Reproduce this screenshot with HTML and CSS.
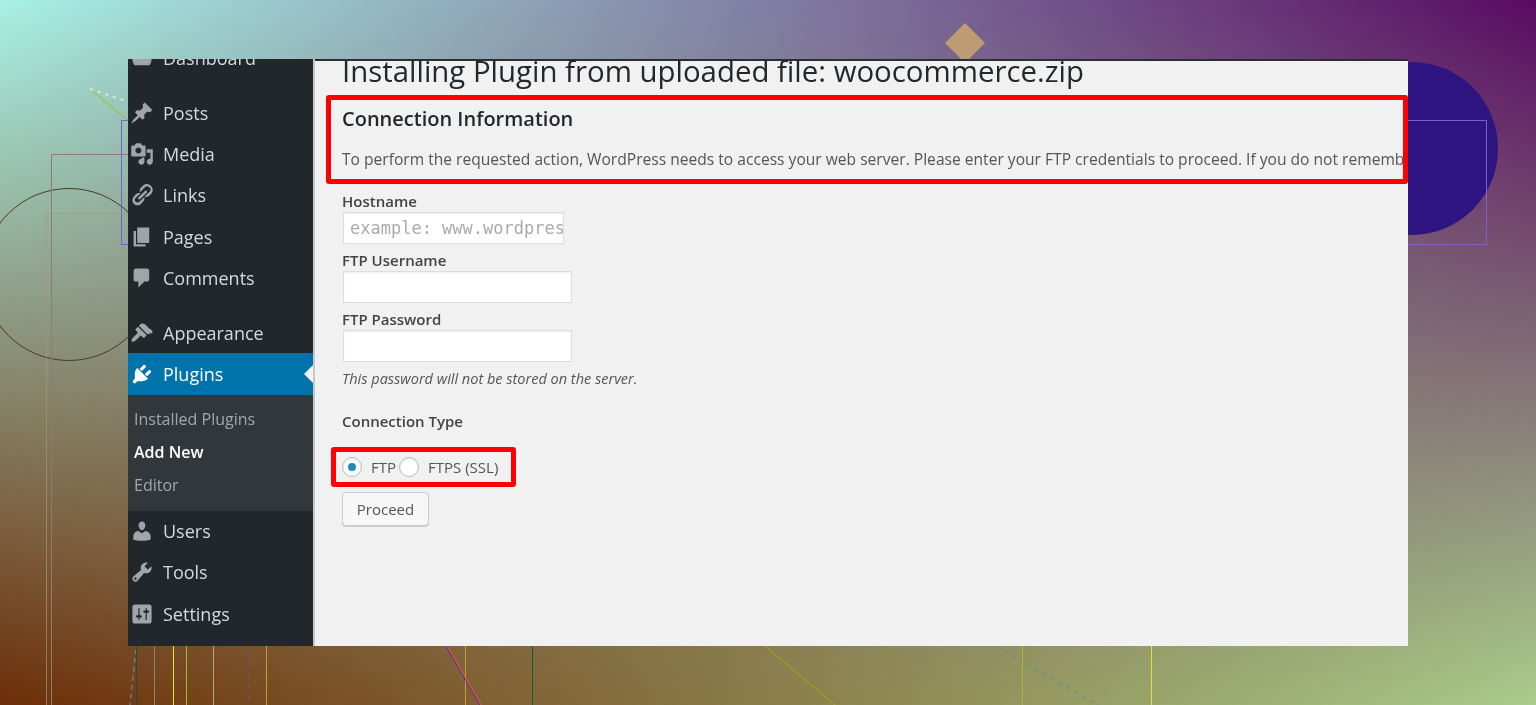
FILE: index.html
```html
<!DOCTYPE html>
<html lang="en">
<head>
    <meta charset="UTF-8">
    <meta name="viewport" content="width=device-width, initial-scale=1.0">
    <title>Connection Information</title>
    <link rel="stylesheet" href="styles.css">
</head>
<body>
    <div class="backdrop"></div>
    <svg class="shapes" width="1536" height="705" viewBox="0 0 1536 705" fill="none">
        <circle cx="1411.500" cy="148.500" r="86.500" fill="#2e1480"/>
        <path d="M965 23l20 20-20 20-20-20z" fill="#bd9b73"/>
        <circle cx="69" cy="274.500" r="86" stroke="#4a3a22"/>
        <rect x="121.500" y="120.500" width="1365" height="124" stroke="#7a5fd0"/>
        <path d="M51.500 705V154.500H130" stroke="#8d7c72"/>
        <path d="M46.500 705V213.500H130" stroke="#a39a72" stroke-opacity=".7"/>
        <path d="M90 89l40 33" stroke="#9ac000"/>
        <path d="M90 89l36 12" stroke="#dfe3e6" stroke-width="2" stroke-dasharray="3 5"/>
        <path d="M137 640l-7 65" stroke="#6d8fc0" stroke-dasharray="5 4"/>
        <path d="M136.500 640v65" stroke="#1f4f3c"/>
        <path d="M154.500 640v65" stroke="#8b8270"/>
        <path d="M173.500 640v65" stroke="#e6e040"/>
        <path d="M186.500 640v65" stroke="#9cc030"/>
        <path d="M213.500 640v65" stroke="#b0a878"/>
        <path d="M248.500 640v65" stroke="#8e3aa0" stroke-dasharray="6 5"/>
        <path d="M266.500 640v65" stroke="#c89a30"/>
        <path d="M465.500 640v65" stroke="#c89a30"/>
        <path d="M532.500 640v65" stroke="#125c48"/>
        <path d="M447 646l34 59" stroke="#f06010" stroke-width="1.500"/>
        <path d="M446 646l34 59" stroke="#4020f0"/>
        <path d="M765 646l70 59" stroke="#9ab000"/>
        <path d="M996 646l102 59" stroke="#6a80a8" stroke-dasharray="5 4"/>
        <path d="M1022.500 640v65" stroke="#9cc030"/>
        <path d="M1151.500 640v65" stroke="#dde040"/>
    </svg>

    <div class="shot">
        <nav class="sidebar">
            <a class="menu-item first"><svg class="icon" viewBox="0 0 20 20"><path d="M3.760 16h12.480c1.100-1.430 1.760-3.210 1.760-5.140 0-4.800-3.960-7.860-8-7.860s-8 3.060-8 7.860c0 1.930.66 3.710 1.760 5.140z"/></svg>Dashboard</a>
            <a class="menu-item group-start"><svg class="icon" viewBox="0 0 20 20"><path d="M10.440 3.020l1.820-1.820 6.360 6.350-1.830 1.820c-1.050-.68-2.480-.57-3.410.36l-.75.75c-.92.93-1.040 2.350-.35 3.410l-1.830 1.820-2.410-2.410-2.800 2.790c-.42.42-3.380 2.710-3.800 2.290s1.860-3.390 2.280-3.810l2.790-2.790L4.100 9.360l1.830-1.820c1.050.69 2.480.57 3.400-.36l.75-.75c.93-.92 1.050-2.350.36-3.410z"/></svg>Posts</a>
            <a class="menu-item"><svg class="icon" viewBox="0 0 20 20"><path d="M13 11V4c0-.55-.45-1-1-1h-1.670L9 1H5L3.670 3H2c-.55 0-1 .45-1 1v7c0 .55.45 1 1 1h10c.55 0 1-.45 1-1zM7 4.500c1.380 0 2.500 1.120 2.500 2.500S8.380 9.500 7 9.500 4.500 8.380 4.500 7 5.620 4.500 7 4.500zM14 6h5v10.500c0 1.380-1.120 2.500-2.500 2.500S14 17.880 14 16.500s1.120-2.500 2.500-2.500c.17 0 .34.020.5.050V9h-3V6zm-4 8.050V13h2v3.500c0 1.380-1.120 2.500-2.500 2.500S7 17.880 7 16.500 8.120 14 9.500 14c.17 0 .34.020.5.050z"/></svg>Media</a>
            <a class="menu-item"><svg class="icon" viewBox="0 0 20 20"><path d="M17.740 2.760c1.680 1.690 1.680 4.410 0 6.100l-1.530 1.520c-1.120 1.120-2.700 1.510-4.140 1.170l2.160-2.170.76-.76 1.530-1.520c.84-.84.84-2.210 0-3.050l-.76-.76c-.85-.84-2.220-.84-3.060 0l-1.520 1.530-.76.76-2.170 2.160c-.34-1.440.05-3.020 1.170-4.140l1.520-1.530c1.690-1.680 4.410-1.680 6.100 0zM8.590 13.430l5.340-5.340c.42-.42.42-1.100 0-1.520-.44-.43-1.130-.39-1.530 0l-5.330 5.340c-.42.42-.42 1.100 0 1.520.44.43 1.130.39 1.520 0zm-.76 2.290l4.140-4.140c.34 1.440-.05 3.020-1.170 4.140l-1.520 1.530c-1.690 1.680-4.410 1.680-6.100 0-1.680-1.690-1.680-4.410 0-6.100l1.530-1.520c1.120-1.120 2.700-1.510 4.140-1.170l-4.140 4.140c-.85.84-.85 2.210 0 3.050.84.84 2.210.84 3.050 0z"/></svg>Links</a>
            <a class="menu-item"><svg class="icon" viewBox="0 0 20 20"><path d="M6 15V2h10v13H6zm-1 1h8v2H3V5h2v11z"/></svg>Pages</a>
            <a class="menu-item"><svg class="icon" viewBox="0 0 20 20"><path d="M5 2h9c1.100 0 2 .9 2 2v7c0 1.100-.9 2-2 2h-2l-5 5v-5H5c-1.100 0-2-.9-2-2V4c0-1.100.9-2 2-2z"/></svg>Comments</a>
            <a class="menu-item group-start"><svg class="icon" viewBox="0 0 20 20"><path d="M14.480 11.060L7.410 3.990l1.500-1.500c.5-.56 2.300-.47 3.510.32 1.210.8 1.430 1.280 2.660 2.510 1.230 1.220 2.220 1.370 2.970 2.120.75.74.81 2.140.43 2.620zm-.71.710L6.700 4.700 4.930 6.470c-.39.39-.39 1.020 0 1.410l1.060 1.060c.39.39.39 1.030 0 1.420-.6.6-1.430 1.270-2.210 2.050-2.060 2.060-3.020 3.850-2.210 4.660.8.8 2.600-.16 4.650-2.220.78-.78 1.450-1.610 2.050-2.210.39-.39 1.030-.39 1.420 0l1.060 1.060c.39.39 1.020.39 1.410 0z"/></svg>Appearance</a>
            <a class="menu-item current"><svg class="icon" viewBox="0 0 20 20"><path d="M13.110 4.360L9.870 7.600 8 5.730l3.240-3.240c.35-.34 1.050-.2 1.560.32.52.51.66 1.210.31 1.550zm-8 1.770l.91-1.120 9.010 9.010-1.190.84c-.71.71-2.630 1.160-3.820 1.160H6.140L4.900 17.260c-.59.59-1.540.59-2.120 0-.59-.58-.59-1.530 0-2.120l1.240-1.240v-3.880c0-1.130.4-3.190 1.090-3.890zm7.260 3.970l3.240-3.240c.34-.35 1.040-.21 1.550.31.52.51.66 1.210.31 1.550l-3.240 3.250z"/></svg>Plugins</a>
            <div class="submenu">
                <a>Installed Plugins</a>
                <a class="active">Add New</a>
                <a>Editor</a>
            </div>
            <a class="menu-item"><svg class="icon" viewBox="0 0 20 20"><path d="M10 9.250c-2.270 0-2.730-3.440-2.730-3.440C7 4.020 7.820 2 9.970 2c2.160 0 2.980 2.020 2.710 3.810 0 0-.41 3.440-2.680 3.440zm0 2.570L12.720 10c2.390 0 4.520 2.330 4.520 4.530v2.490s-3.650 1.130-7.240 1.130c-3.650 0-7.240-1.130-7.240-1.130v-2.490c0-2.250 1.940-4.480 4.150-4.480z"/></svg>Users</a>
            <a class="menu-item"><svg class="icon" viewBox="0 0 20 20"><path d="M16.680 9.770c-1.340 1.340-3.300 1.670-4.950.99l-5.410 6.520c-.99.99-2.590.99-3.580 0s-.99-2.590 0-3.570l6.520-5.420c-.68-1.650-.35-3.610.99-4.950 1.280-1.280 3.120-1.620 4.720-1.060l-2.890 2.890 2.820 2.820 2.860-2.870c.53 1.580.18 3.400-1.080 4.650zM3.810 16.210c.4.39 1.040.39 1.430 0 .4-.4.4-1.040 0-1.430-.39-.4-1.030-.4-1.430 0-.39.39-.39 1.030 0 1.430z"/></svg>Tools</a>
            <a class="menu-item"><svg class="icon" viewBox="0 0 20 20"><path d="M18 16V4c0-1.100-.9-2-2-2H4c-1.100 0-2 .9-2 2v12c0 1.100.9 2 2 2h12c1.100 0 2-.9 2-2zM8 11h1c.55 0 1 .45 1 1s-.45 1-1 1H8v1.500c0 .28-.22.5-.5.5s-.5-.22-.5-.5V13H6c-.55 0-1-.45-1-1s.45-1 1-1h1V5.500c0-.28.22-.5.5-.5s.5.22.5.5V11zm5-2h-1c-.55 0-1-.45-1-1s.45-1 1-1h1V5.500c0-.28.22-.5.5-.5s.5.22.5.5V7h1c.55 0 1 .45 1 1s-.45 1-1 1h-1v5.500c0 .28-.22.5-.5.5s-.5-.22-.5-.5V9z"/></svg>Settings</a>
        </nav>

        <main class="content">
            <h1>Installing Plugin from uploaded file: woocommerce.zip</h1>

            <div class="highlight info">
                <h2>Connection Information</h2>
                <p>To perform the requested action, WordPress needs to access your web server. Please enter your FTP credentials to proceed. If you do not remember your credentials, you should contact your web host.</p>
            </div>

            <div class="field">
                <label for="hostname">Hostname</label>
                <input class="host-input" id="hostname" type="text" placeholder="example: www.wordpress.org">
            </div>
            <div class="field">
                <label for="username">FTP Username</label>
                <input id="username" type="text">
            </div>
            <div class="field">
                <label for="password">FTP Password</label>
                <input id="password" type="text">
            </div>
            <em class="note">This password will not be stored on the server.</em>

            <h3>Connection Type</h3>
            <div class="highlight radios">
                <label><input type="radio" name="type" checked>FTP</label>
                <label><input type="radio" name="type">FTPS (SSL)</label>
            </div>

            <button class="button">Proceed</button>
        </main>
    </div>
</body>
</html>
```

FILE: styles.css
```css
html, body {
    height: 100%;
}
body {
    margin: 0;
    height: 705px;
    padding: 59px 128px 0;
    box-sizing: border-box;
    overflow: hidden;
    position: relative;
    font-family: "Open Sans", sans-serif;
    background: linear-gradient(to right, #6d2e08, #a9cd8a);
}
.backdrop {
    position: absolute;
    inset: 0;
    background: linear-gradient(to right, #a8f2e5, #590a62);
    -webkit-mask-image: linear-gradient(to bottom, #000, transparent);
    mask-image: linear-gradient(to bottom, #000, transparent);
}
.shapes {
    position: absolute;
    left: 0;
    top: 0;
}
.shot {
    position: relative;
    display: flex;
    width: 1280px;
    height: 587px;
    overflow: hidden;
    filter: blur(.4px);
}

/* sidebar */
.sidebar {
    width: 185px;
    flex: none;
    background-color: #22272c;
    border-right: 2px solid #c4c6c8;
    box-sizing: content-box;
}
.menu-item {
    display: flex;
    align-items: center;
    gap: 9px;
    height: 41.25px;
    padding-left: 2px;
    font-size: 18px;
    color: #d6d9db;
    position: relative;
}
.menu-item.first {
    margin-top: -21.500px;
}
.menu-item.group-start {
    margin-top: 13.500px;
}
.icon {
    width: 24px;
    height: 24px;
    fill: #a0a5aa;
    flex: none;
}
.menu-item.current {
    background-color: #0073aa;
    color: #fff;
    margin-top: 0;
}
.menu-item.current .icon {
    fill: #fff;
}
.menu-item.current::after {
    content: "";
    position: absolute;
    right: 0;
    top: 12px;
    border: 9px solid transparent;
    border-left-width: 0;
    border-right-color: #f1f1f1;
}
.submenu {
    background-color: #32373c;
    padding: 8px 0 10px 6px;
    height: 98px;
}
.submenu a {
    display: block;
    height: 33px;
    line-height: 33px;
    font-size: 16px;
    color: #a3a7ab;
}
.submenu a.active {
    color: #fff;
    font-weight: 600;
}

/* main area */
.content {
    flex: 1;
    min-width: 0;
    position: relative;
    background-color: #f1f1f1;
    border-top: 2px solid #2b2e33;
    padding-left: 27px;
    color: #444;
}
h1 {
    margin: -14px 0 0;
    height: 48px;
    line-height: 48px;
    font-size: 29.400px;
    font-weight: 400;
    color: #23282d;
    white-space: nowrap;
}
.highlight {
    border: 5px solid #fe0000;
    border-radius: 3px;
    box-sizing: border-box;
}
.info {
    margin: 0 0 0 -16px;
    height: 89px;
    padding: 5px 0 0 11px;
    overflow: hidden;
}
h2 {
    margin: 0;
    line-height: 27px;
    font-size: 20px;
    font-weight: 600;
    color: #23282d;
}
.info p {
    margin: 16px 0 0;
    line-height: 22px;
    font-size: 15.600px;
    white-space: nowrap;
    color: #555;
}
.field label {
    display: block;
    height: 22px;
    line-height: 22px;
    font-size: 15px;
    font-weight: 600;
}
.field {
    margin-bottom: 5px;
}
.info + .field {
    margin-top: 6px;
}
input[type="text"] {
    display: block;
    width: 229px;
    height: 32px;
    margin-left: 1px;
    padding: 0 0 0 6px;
    box-sizing: border-box;
    background-color: #fff;
    border: 1px solid #ddd;
    box-shadow: inset 0 1px 2px rgba(0,0,0,0.07);
    outline: none;
}
.host-input {
    font-family: "DejaVu Sans Mono", monospace;
    font-size: 17px;
}
input[type="text"].host-input {
    width: 221px;
}
.host-input::placeholder {
    color: #aaa;
}
.note {
    display: block;
    height: 24px;
    line-height: 24px;
    font-size: 14.500px;
    color: #555;
}
h3 {
    margin: 18px 0 0;
    height: 24px;
    line-height: 24px;
    font-size: 15px;
    font-weight: 600;
    color: #444;
}
.radios {
    display: inline-flex;
    align-items: center;
    width: 185px;
    height: 40px;
    margin: 14px 0 0 -11px;
    padding-left: 6px;
    font-size: 15px;
    color: #555;
}
.radios label {
    display: flex;
    align-items: center;
    gap: 9px;
}
.radios input {
    appearance: none;
    width: 20px;
    height: 20px;
    margin: 0 0 0 0;
    border: 1px solid #bbb;
    border-radius: 50%;
    background-color: #fff;
    box-shadow: inset 0 1px 2px rgba(0,0,0,0.1);
    position: relative;
}
.radios input:checked::before {
    content: "";
    position: absolute;
    left: 5px;
    top: 5px;
    width: 8px;
    height: 8px;
    border-radius: 50%;
    background-color: #1e8cbe;
}
.radios label + label {
    margin-left: 3px;
}
.button {
    display: block;
    width: 87px;
    height: 34px;
    margin-top: 5px;
    padding: 0;
    font-family: inherit;
    font-size: 15px;
    color: #555;
    background-color: #f7f7f7;
    border: 1px solid #ccc;
    border-radius: 4px;
    box-shadow: 0 1px 0 #ccc;
}
```
